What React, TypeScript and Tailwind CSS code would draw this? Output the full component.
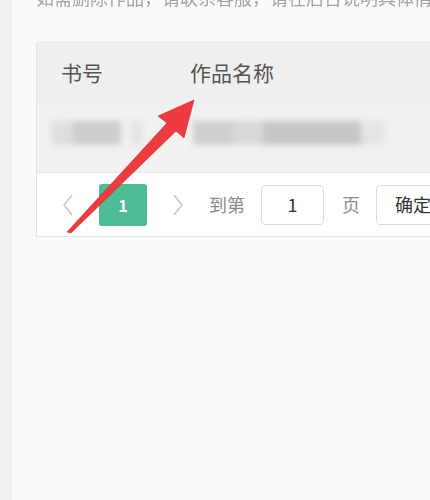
const font = { fontFamily: '"Noto Sans CJK SC", "Noto Sans", sans-serif' };

function Chevron({ dir }: { dir: "left" | "right" }) {
  return (
    <svg width="12" height="24" viewBox="0 0 12 24" className="shrink-0">
      <polyline
        points={dir === "left" ? "10,2 2,12 10,22" : "2,2 10,12 2,22"}
        fill="none"
        stroke="#c4c4c4"
        strokeWidth="1.4"
      />
    </svg>
  );
}

export default function App() {
  return (
    <div className="relative h-[500px] w-[430px] overflow-hidden bg-[#f9fafc] flex" style={font}>
      {/* 左侧边栏 */}
      <div className="w-3 shrink-0 bg-[#f1f1f2]" />

      <div className="flex-1 pl-6 overflow-hidden">
        {/* 被截断的提示文字 */}
        <div className="-mt-[13px] h-[21px] whitespace-nowrap text-[18px] leading-[21px] text-[#a3a3a3] blur-[0.6px]">
          如需删除作品，请联系客服，请在后台说明具体情况并提交
        </div>

        {/* 表格 */}
        <div className="mt-[33px] w-[420px] rounded-tl-sm border-l border-b border-[#e3e3e3] bg-white">
          <div className="flex h-16 items-center bg-[#efefef] text-[21px] text-[#555]">
            <div className="w-[153px] pl-6">书号</div>
            <div>作品名称</div>
          </div>

          {/* 模糊数据行 */}
          <div className="relative h-[67px] bg-[#f1f1f1] overflow-hidden">
            <div className="flex h-full items-center pb-3 blur-[3px]">
              <div className="ml-[14px] h-6 w-[22px] bg-[#dedede]" />
              <div className="h-6 w-12 bg-[#cdcdcd]" />
              <div className="ml-[10px] h-6 w-3 bg-[#e3e3e3]" />
              <div className="ml-[50px] h-6 w-[40px] bg-[#cfcfcf]" />
              <div className="h-6 w-[30px] bg-[#d9d9d9]" />
              <div className="h-6 w-[98px] bg-[#c6c6c6]" />
              <div className="h-6 w-6 bg-[#e4e4e4]" />
            </div>
          </div>

          {/* 分页 */}
          <div className="flex h-16 items-center border-t border-[#e6e6e6] bg-white text-[18px]">
            <div className="ml-[25px]">
              <Chevron dir="left" />
            </div>
            <div className="ml-[25px] flex h-[42px] w-12 shrink-0 items-center justify-center rounded-[3px] bg-[#4dbb94] text-[16px] font-bold text-white">
              1
            </div>
            <div className="ml-[25px]">
              <Chevron dir="right" />
            </div>
            <span className="ml-[25px] whitespace-nowrap text-[#8a8a8a]">到第</span>
            <div className="ml-4 flex h-10 w-[63px] shrink-0 items-center justify-center rounded-sm border border-[#dcdcdc] text-[#333]">
              1
            </div>
            <span className="ml-[18px] text-[#8a8a8a]">页</span>
            <div className="ml-4 flex h-10 w-20 shrink-0 items-center rounded-sm border border-[#dcdcdc] pl-[18px] text-[#333]">
              确定
            </div>
          </div>
        </div>
      </div>

      {/* 红色箭头标注 */}
      <svg className="absolute left-0 top-0" width="430" height="500" viewBox="0 0 430 500">
        <polygon
          points="194,100 158,116 167,123 67,232 71,233 176,131 184,138"
          fill="#ef3b3f"
          stroke="#c92a2f"
          strokeWidth="0.6"
          strokeLinejoin="round"
        />
      </svg>
    </div>
  );
}
